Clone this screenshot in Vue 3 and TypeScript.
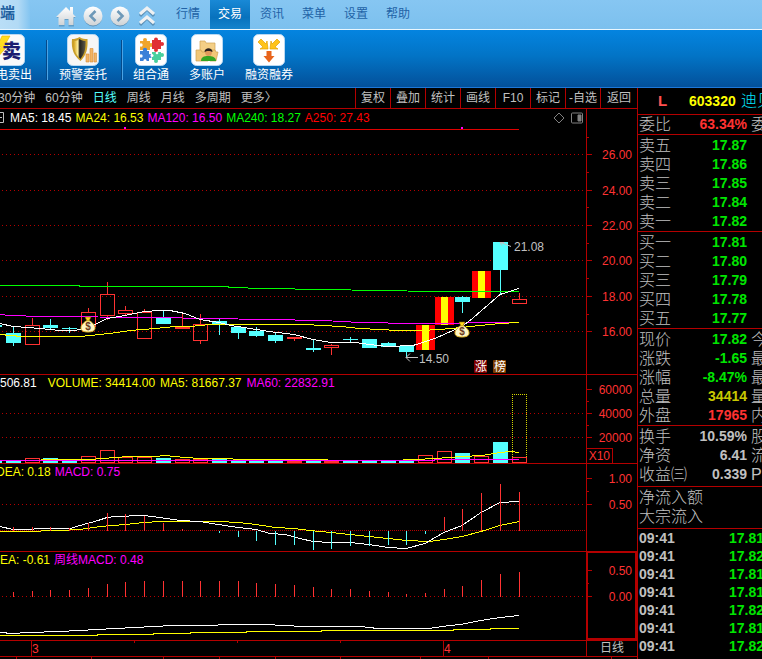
<script setup lang="ts">
type Point = [number, number]

const menu = ['行情', '交易', '资讯', '菜单', '设置', '帮助']
const activeMenu = '交易'

const periods = ['30分钟', '60分钟', '日线', '周线', '月线', '多周期', '更多〉']
const actions = ['复权', '叠加', '统计', '画线', 'F10', '标记', '-自选', '返回']

const priceLegend = [
  { text: 'MA5: 18.45', tone: 'white' },
  { text: 'MA24: 16.53', tone: 'yellow' },
  { text: 'MA120: 16.50', tone: 'magenta' },
  { text: 'MA240: 18.27', tone: 'green' },
  { text: 'A250: 27.43', tone: 'red' },
]

// x centres of the trading days
const days = [13, 32, 50, 69, 88, 107, 125, 144, 163, 182, 200, 219, 238, 256, 275, 294, 313, 331, 350, 369, 388, 406, 425, 444, 462, 481, 500, 519]

interface Candle { kind: 'up' | 'down' | 'limit'; top: number; bottom: number; high: number; low: number }
const c = (kind: Candle['kind'], top: number, bottom: number, high = top, low = bottom): Candle => ({ kind, top, bottom, high, low })

const candles: Candle[] = [
  c('down', 333, 343, 327, 346),
  c('up', 325, 345, 318),
  c('down', 325, 328, 319, 329),
  c('down', 328, 329, 327, 333),
  c('up', 312, 327, 308),
  c('up', 294, 316, 282, 320),
  c('up', 310, 314, 306, 316),
  c('up', 312, 339, 309),
  c('down', 318, 324, 311),
  c('up', 327, 329, 314),
  c('up', 324, 341, 314, 344),
  c('down', 321, 324, 319, 335),
  c('down', 327, 333, 326, 339),
  c('down', 331, 336, 327, 337),
  c('down', 335, 341, 333, 343),
  c('up', 337, 339, 337, 341),
  c('down', 348, 350, 340, 352),
  c('up', 345, 348, 344, 355),
  c('down', 339, 340, 337, 342),
  c('down', 339, 348),
  c('down', 343, 347, 342),
  c('down', 346, 352, 346, 357),
  c('limit', 325, 350),
  c('limit', 297, 325),
  c('down', 297, 302, 296, 313),
  c('limit', 271, 298),
  c('down', 242, 270, 242, 294),
  c('up', 299, 304, 293),
]

const volumes = [460, 458, 458, 460, 456, 450, 457, 457, 458, 459, 459, 459, 461, 461, 461, 461, 461, 461, 461, 461, 461, 461, 455, 451, 453, 456, 442, 457]
const macd = [527, 527, 527, 528, 523, 513, 514, 516, 523, 529, 530, 533, 537, 541, 545, 545, 550, 549, 546, 546, 545, 545, 534, 517, 509, 493, 484, 492]
const weekly = [592, 591, 590, 590, 588, 584, 582, 581, 581, 581, 581, 581, 581, 583, 584, 585, 587, 589, 589, 591, 592, 594, 593, 589, 586, 580, 574, 572]

const path = (points: Point[]) => points.map(p => p.join(',')).join(' ')

const price5 = path([[0, 323], [13, 326], [28, 327], [50, 329], [60, 330], [75, 330], [88, 327], [95, 324], [107, 318], [125, 315], [144, 311], [160, 310], [170, 310], [185, 313], [200, 319], [219, 322], [231, 325], [250, 328], [269, 331], [294, 334], [313, 339], [331, 342], [355, 342], [369, 344], [388, 346], [413, 345], [435, 338], [462, 326], [470, 320], [500, 294], [519, 288]])
const price24 = path([[0, 334], [22, 336], [80, 336], [100, 334], [117, 332], [130, 330], [155, 328], [175, 326], [190, 326], [210, 324], [304, 324], [323, 325], [341, 326], [360, 328], [380, 329], [398, 330], [420, 330], [440, 329], [462, 327], [480, 325], [500, 323], [519, 322]])
const price120 = path([[0, 314], [10, 315], [42, 316], [154, 317], [266, 319], [323, 320], [360, 322], [416, 323], [519, 322]])
const price240 = path([[0, 285], [79, 285], [80, 286], [228, 286], [229, 287], [266, 288], [323, 289], [379, 290], [435, 291], [519, 291]])
const vol5 = path([[41, 459], [90, 459], [115, 457], [130, 456], [155, 456], [165, 455], [185, 457], [200, 458], [265, 459], [390, 460], [416, 459], [435, 458], [462, 456], [482, 455], [500, 452], [510, 451], [519, 452]])
const vol60 = path([[0, 460], [434, 460], [435, 459], [519, 459]])
const dif = path([[0, 526], [13, 529], [28, 529], [40, 528], [70, 528], [80, 525], [98, 520], [107, 517], [115, 516], [144, 515], [160, 517], [180, 520], [200, 521], [212, 523], [238, 527], [256, 529], [270, 533], [285, 534], [300, 538], [313, 541], [331, 542], [350, 542], [369, 544], [388, 547], [406, 548], [425, 543], [435, 537], [444, 532], [462, 525], [481, 512], [500, 502], [519, 501]])
const dea = path([[0, 531], [22, 531], [60, 530], [80, 529], [100, 526], [125, 524], [144, 522], [160, 521], [220, 521], [238, 522], [256, 524], [275, 527], [294, 528], [310, 530], [331, 532], [350, 534], [369, 536], [388, 538], [406, 540], [430, 541], [444, 539], [462, 536], [481, 531], [500, 525], [519, 521]])
const weekDif = path([[0, 632], [13, 633], [28, 632], [60, 631], [79, 630], [97, 629], [115, 628], [135, 627], [154, 626], [172, 625], [265, 624], [304, 626], [360, 626], [378, 628], [429, 628], [442, 626], [460, 624], [481, 620], [500, 617], [519, 615]])
const weekDea = path([[0, 635], [97, 635], [98, 634], [153, 634], [154, 633], [190, 633], [191, 632], [246, 632], [247, 631], [321, 631], [322, 630], [453, 630], [454, 629], [490, 629], [491, 628], [519, 628]])

const priceTicks = [{ y: 154, label: '26.00' }, { y: 190, label: '24.00' }, { y: 225, label: '22.00' }, { y: 260, label: '20.00' }, { y: 296, label: '18.00' }, { y: 331, label: '16.00' }]
const volumeTicks = [{ y: 389, label: '60000' }, { y: 413, label: '40000' }, { y: 437, label: '20000' }]
const macdTicks = [{ y: 478, label: '1.00' }, { y: 504, label: '0.50' }]
const weekTicks = [{ y: 570, label: '0.50' }, { y: 596, label: '0.00' }]

interface Row { label: string; value: string; tone: string; next?: string }
const sections: Row[][] = [
  [{ label: '委比', value: '63.34%', tone: 'loss', next: '委' }],
  [['五', '17.87'], ['四', '17.86'], ['三', '17.85'], ['二', '17.84'], ['一', '17.82']].map(([n, value]) => ({ label: '卖' + n, value, tone: 'gain' })),
  [['一', '17.81'], ['二', '17.80'], ['三', '17.79'], ['四', '17.78'], ['五', '17.77']].map(([n, value]) => ({ label: '买' + n, value, tone: 'gain' })),
  [
    { label: '现价', value: '17.82', tone: 'gain', next: '今' },
    { label: '涨跌', value: '-1.65', tone: 'gain', next: '最' },
    { label: '涨幅', value: '-8.47%', tone: 'gain', next: '最' },
    { label: '总量', value: '34414', tone: 'gold', next: '量' },
    { label: '外盘', value: '17965', tone: 'loss', next: '内' },
  ],
  [
    { label: '换手', value: '10.59%', tone: 'plain', next: '股' },
    { label: '净资', value: '6.41', tone: 'plain', next: '流' },
    { label: '收益㈢', value: '0.339', tone: 'plain', next: 'P' },
  ],
]
const flows = ['净流入额', '大宗流入']
const trades = ['17.81', '17.82', '17.81', '17.81', '17.82', '17.81', '17.82']
</script>

<template>
  <div class="terminal">
    <header class="topbar">
      <div class="brand">端</div>
      <div class="quick">
        <button type="button" aria-label="主页">
          <svg width="22" height="22" viewBox="0 0 22 22">
            <defs>
              <linearGradient id="silver" x1="0" y1="0" x2="0" y2="1">
                <stop offset="0" stop-color="#fff" /><stop offset="1" stop-color="#cfd3d6" />
              </linearGradient>
            </defs>
            <path d="M4 20.500V12H1.500L11 3l4 3.500V2.500h3V9l2.500 3H19v8.500h-5.500V14h-4v6.500z" fill="#4d85ad" opacity=".6" transform="translate(0 1)" />
            <path d="M3.500 20V12H1L11 2l4 4V2h3v7l3 3h-2.500v8h-5v-6h-4v6z" fill="url(#silver)" />
          </svg>
        </button>
        <button type="button" aria-label="后退">
          <svg width="22" height="22" viewBox="0 0 22 22">
            <circle cx="11" cy="12.500" r="9" fill="#5b8fb5" /><circle cx="11" cy="11" r="9.500" fill="url(#silver)" />
            <path d="M13.500 6l-5 5 5 5" fill="none" stroke="#6e99b8" stroke-width="2.600" />
          </svg>
        </button>
        <button type="button" aria-label="前进">
          <svg width="22" height="22" viewBox="0 0 22 22">
            <circle cx="11" cy="12.500" r="9" fill="#5b8fb5" /><circle cx="11" cy="11" r="9.500" fill="url(#silver)" />
            <path d="M8.500 6l5 5-5 5" fill="none" stroke="#6e99b8" stroke-width="2.600" />
          </svg>
        </button>
        <button type="button" aria-label="收起">
          <svg width="22" height="22" viewBox="0 0 22 22" fill="none" stroke-width="3">
            <path d="M4 10l7-7 7 7M4 19l7-7 7 7" stroke="#5b8fb5" transform="translate(0 1)" />
            <path d="M4 9l7-6 7 6M4 18l7-6 7 6" stroke="#eef1f3" />
          </svg>
        </button>
      </div>
      <nav class="menu">
        <a v-for="m in menu" :key="m" href="#" :class="{ active: m === activeMenu }">{{ m }}</a>
      </nav>
    </header>

    <div class="toolbar">
      <button type="button" class="tool first">
        <svg width="32" height="32" viewBox="0 0 32 32">
          <rect x=".5" y=".5" width="31" height="31" rx="5" fill="#fafafa" stroke="#b9d8f2" />
          <path d="M9 2h8l-4 7h4L4 24l4-11H4z" fill="#ffdc1e" stroke="#e9b400" stroke-width=".6" />
          <text x="9" y="24" font-size="19" font-weight="900" fill="#1d1d72">卖</text>
        </svg>
        <span>电卖出</span>
      </button>
      <i class="split"></i>
      <button type="button" class="tool">
        <svg width="32" height="32" viewBox="0 0 32 32">
          <defs>
            <linearGradient id="shield" x1="0" y1="0" x2="1" y2="0">
              <stop offset="0" stop-color="#d4a21a" /><stop offset=".35" stop-color="#fff0a0" /><stop offset=".5" stop-color="#24231e" /><stop offset="1" stop-color="#5d5a4a" />
            </linearGradient>
          </defs>
          <rect x=".5" y=".5" width="31" height="31" rx="5" fill="#f6f6f6" stroke="#b9d8f2" />
          <path d="M12.500 3c3 2 5 2 8 2 .5 10-1 16-7 22C7 22 4 15 5 5c3 0 5-.5 7.500-2z" fill="#caa02b" />
          <path d="M12.500 5c2 1.500 4 2 6 2 .3 8-1 13-5 18C8 20 6 14 7 7c2 0 4-.5 5.500-2z" fill="url(#shield)" />
          <path d="M19 28V20h3v8zM23 28V14.500h3V28zM27 28v-9h2.500v9z" fill="#f2b566" stroke="#d98f3a" stroke-width=".6" />
        </svg>
        <span>预警委托</span>
      </button>
      <i class="split"></i>
      <div class="tools">
        <button type="button" class="tool">
          <svg width="32" height="32" viewBox="0 0 32 32">
            <rect x=".5" y=".5" width="31" height="31" rx="5" fill="#fff" stroke="#b9d8f2" />
            <g fill="#efa52c"><path d="M5 7h10v9H5z" /><circle cx="10" cy="6" r="2" /><circle cx="16" cy="11" r="2" /></g>
            <g fill="#e02f35"><path d="M17 6h9v9h-9z" /><circle cx="21" cy="5.500" r="2" /><circle cx="27" cy="10" r="2" /><circle cx="21" cy="16" r="2" /></g>
            <g fill="#3b80d8"><path d="M5 17h9v10H5z" /><circle cx="10" cy="16" r="2.200" /><circle cx="15" cy="22" r="2" /></g>
            <g fill="#48cf9e"><path d="M17 18h9v8h-9z" /><circle cx="21" cy="27" r="2" /><circle cx="27" cy="21" r="2" /></g>
            <g fill="#fff"><circle cx="6" cy="11" r="1.700" /><circle cx="17" cy="21.500" r="1.500" /><circle cx="6" cy="22" r="1.700" /><circle cx="10" cy="26.500" r="1.500" /><circle cx="22" cy="19" r="1.300" /></g>
          </svg>
          <span>组合通</span>
        </button>
        <button type="button" class="tool">
          <svg width="32" height="32" viewBox="0 0 32 32">
            <rect x=".5" y=".5" width="31" height="31" rx="5" fill="#fff" stroke="#b9d8f2" />
            <path d="M9 7h5l1 2h9v10H9z" fill="#f4cf86" stroke="#cfa050" stroke-width=".7" />
            <path d="M5 16h5l1 2h6v9H5zM19 16h5l1 2h2l-2 9h-6z" fill="#f2c777" stroke="#cfa050" stroke-width=".7" />
            <path d="M10 27c0-4 3-5 7-5s8 1 8 5z" fill="#35a522" />
            <circle cx="17.500" cy="18.500" r="3.400" fill="#e09a5c" />
            <path d="M13.500 18c0-5 8-5 8 0-2-1.500-6-1.500-8 0z" fill="#2a211c" />
          </svg>
          <span>多账户</span>
        </button>
        <button type="button" class="tool wide">
          <svg width="32" height="32" viewBox="0 0 32 32">
            <rect x=".5" y=".5" width="31" height="31" rx="5" fill="#fff" stroke="#b9d8f2" />
            <path d="M5 8l3-3 5 5 1-3 1 8h-8l3-2zM27 8l-3-3-5 5-1-3-1 8h8l-3-2z" fill="#ffc31a" stroke="#e4a000" stroke-width=".7" />
            <path d="M13.500 17h5v5h3L16 28.500 10.500 22h3z" fill="#e8641b" />
          </svg>
          <span>融资融券</span>
        </button>
      </div>
    </div>

    <div class="workspace">
      <main class="charts">
        <div class="subnav">
          <div class="periods">
            <button v-for="p in periods" :key="p" type="button" :class="{ on: p === '日线' }">{{ p }}</button>
          </div>
          <div class="actions">
            <button v-for="a in actions" :key="a" type="button">{{ a }}</button>
          </div>
        </div>

        <section class="panel price">
          <div class="plot">
            <div class="legend top">
              <svg class="lead" width="5" height="12" viewBox="0 0 5 12" fill="none" stroke="#c0c0c0"><path d="M0 .5h3.500v10H0M0 5.500h2" /></svg>
              <span v-for="l in priceLegend" :key="l.text" :class="l.tone">{{ l.text }}</span>
              <svg class="tail" width="30" height="12" viewBox="0 0 30 12" fill="none" stroke="#808080">
                <path d="M6 1l5 5-5 5-5-5z" /><rect x="18.500" y="1" width="11" height="10" rx="1" /><path d="M25 3h3v6h-3z" fill="#808080" />
              </svg>
            </div>
            <svg class="drawing" viewBox="0 127 586 247" preserveAspectRatio="xMaxYMin meet">
              <line v-for="t in priceTicks" :key="t.y" class="grid" x1="2" x2="584" :y1="t.y + 0.5" :y2="t.y + 0.5" />
              <path d="M0 129.500H519" stroke="#e00000" shape-rendering="crispEdges" />
              <path d="M124 127h2v2h-2zM461 127h2v2h-2z" fill="#f0f" />
              <g shape-rendering="crispEdges">
                <rect x="0" y="325" width="2" height="2" fill="#54ffff" />
                <g v-for="(k, i) in candles" :key="i" :class="k.kind">
                  <template v-if="k.kind === 'limit'">
                    <rect class="edge" :x="days[i] - 9" :y="k.top" width="19" :height="k.bottom - k.top" />
                    <rect class="core" :x="days[i] - 3" :y="k.top" width="7" :height="k.bottom - k.top" />
                  </template>
                  <template v-else>
                    <path :d="`M${days[i] + 0.5} ${k.high}V${k.top}M${days[i] + 0.5} ${k.bottom}V${k.low}`" />
                    <rect v-if="k.kind === 'down'" :x="days[i] - 7" :y="k.top" width="15" :height="k.bottom - k.top" />
                    <rect v-else :x="days[i] - 6.5" :y="k.top + 0.5" width="14" :height="k.bottom - k.top - 1" />
                  </template>
                </g>
              </g>
              <g class="curve" transform="translate(0 .5)">
                <polyline class="green" :points="price240" /><polyline class="magenta" :points="price120" />
                <polyline class="yellow" :points="price24" /><polyline class="white" :points="price5" />
              </g>
              <g v-for="b in [[88, 325], [462, 330]]" :key="b[0]" :transform="`translate(${b[0]} ${b[1]})`">
                <path d="M-3-8h6l-2 4h-2z" fill="#ffd91c" stroke="#8a6a00" stroke-width=".6" />
                <path d="M-2-4h4c4 3 5 5 5 7 0 3-3 4-7 4s-7-1-7-4c0-2 1-4 5-7z" fill="#fff6c2" stroke="#e0b526" />
                <text x="0" y="5" text-anchor="middle" font-size="10" font-weight="700" fill="#6b3a1c">$</text>
              </g>
              <g class="note">
                <path d="M502 245.500l-2-3h4M501 242.500l10 4M406 357.500h12M410 353.500l-4 4 4 4" fill="none" stroke="#c0c0c0" />
                <text x="514" y="251">21.08</text><text x="419" y="363">14.50</text>
              </g>
              <rect x="474" y="360" width="13" height="13" rx="1" fill="#7c0000" /><rect x="493" y="360" width="13" height="13" rx="1" fill="#7c3c00" />
              <g fill="#fff" font-size="12"><text x="475" y="371">涨</text><text x="494" y="371">榜</text></g>
            </svg>
          </div>
          <svg class="scale" viewBox="586 109 51 265">
            <path class="tick" d="M587 172.500h2M587 207.500h2M587 243.500h2M587 278.500h2M587 314.500h2M587 137.500h2" />
            <g v-for="t in priceTicks" :key="t.y"><path class="tick" :d="`M587 ${t.y + 0.5}h5`" /><text x="632" :y="t.y + 5">{{ t.label }}</text></g>
          </svg>
        </section>

        <section class="panel volume">
          <div class="plot">
            <div class="legend wide"><span class="white">506.81</span><span class="yellow start">VOLUME: 34414.00</span><span class="yellow">MA5: 81667.37</span><span class="magenta">MA60: 22832.91</span></div>
            <svg class="drawing" viewBox="0 393 586 70" preserveAspectRatio="xMaxYMin meet">
              <path class="grid" d="M2 413.500H584M2 437.500H584" />
              <g shape-rendering="crispEdges">
                <rect x="0" y="461" width="2" height="2" fill="#54ffff" />
                <g v-for="(v, i) in volumes" :key="i" :class="candles[i].kind === 'down' ? 'down' : 'up'">
                  <rect v-if="candles[i].kind === 'down'" :x="days[i] - 7" :y="v" width="15" :height="463 - v" />
                  <rect v-else :x="days[i] - 6.5" :y="v + 0.5" width="14" :height="462 - v" />
                </g>
                <path d="M512.500 457V394.500H526.500V457" fill="none" stroke="#d6d600" stroke-dasharray="1 1" />
              </g>
              <g class="curve" transform="translate(0 .5)"><polyline class="yellow" :points="vol5" /><polyline class="magenta" :points="vol60" /></g>
            </svg>
          </div>
          <svg class="scale" viewBox="586 375 51 88">
            <path class="tick" d="M587 401.500h2M587 425.500h2M587 448.500h25.500V463" />
            <g v-for="t in volumeTicks" :key="t.y"><path class="tick" :d="`M587 ${t.y + 0.5}h5`" /><text x="632" :y="t.y + 5">{{ t.label }}</text></g>
            <text x="610" y="460">X10</text>
          </svg>
        </section>

        <section class="panel macd">
          <div class="plot">
            <div class="legend cut"><span class="yellow">DEA: 0.18</span><span class="magenta">MACD: 0.75</span></div>
            <svg class="drawing" viewBox="0 482 586 69" preserveAspectRatio="xMaxYMin meet">
              <path class="grid" d="M2 504.500H584" /><path class="grid dense" d="M0 530.500H586" />
              <g class="curve" transform="translate(0 .5)"><polyline class="yellow" :points="dea" /><polyline class="white" :points="dif" /></g>
              <path v-for="(m, i) in macd" :key="i" :class="m > 530 ? 'bar-down' : 'bar-up'" :d="`M${days[i] + 0.5} 530.500V${m}`" />
            </svg>
          </div>
          <svg class="scale" viewBox="586 464 51 87">
            <path class="tick" d="M587 491.500h2" />
            <g v-for="t in macdTicks" :key="t.y"><path class="tick" :d="`M587 ${t.y + 0.5}h5`" /><text x="632" :y="t.y + 5">{{ t.label }}</text></g>
          </svg>
        </section>

        <section class="panel weekly">
          <div class="plot">
            <div class="legend"><span class="yellow">EA: -0.61</span><span class="magenta">周线MACD: 0.48</span></div>
            <svg class="drawing" viewBox="0 570 586 70" preserveAspectRatio="xMaxYMin meet">
              <path class="grid" d="M2 596.500H584" />
              <path v-for="(w, i) in weekly" :key="i" class="bar-up" :d="`M${days[i] + 0.5} 597V${w}`" />
              <g class="curve" transform="translate(0 .5)"><polyline class="white" :points="weekDif" /><polyline class="yellow" :points="weekDea" /></g>
            </svg>
          </div>
          <svg class="scale" viewBox="586 552 51 88">
            <rect x="587" y="552" width="49" height="87" fill="none" stroke="#b40000" stroke-width="2" />
            <path class="tick" d="M587 583.500h2" />
            <g v-for="t in weekTicks" :key="t.y"><path class="tick" :d="`M587 ${t.y + 0.5}h5`" /><text x="632" :y="t.y + 5">{{ t.label }}</text></g>
          </svg>
        </section>

        <footer class="timeline">
          <svg class="months" viewBox="0 641 586 15" preserveAspectRatio="xMaxYMin meet">
            <path class="tick" d="M31.500 641v15M443.500 641v15M134.500 641v2M237.500 641v2M340.500 641v2" />
            <text x="32" y="653">3</text><text x="444" y="653">4</text>
          </svg>
          <span>日线</span>
        </footer>
        <svg class="ruler" viewBox="0 657 637 2" preserveAspectRatio="xMaxYMin meet">
          <path class="tick" d="M16.500 657v2M91.500 657v2M163.500 657v2M219.500 657v2M275.500 657v2M340.500 657v2M420.500 657v2M488.500 657v2M611.500 657v2" />
        </svg>
      </main>

      <aside class="quote">
        <div class="stock"><span class="flag">L</span><b>603320</b><span class="name">迪贝</span></div>
        <table v-for="(rows, s) in sections" :key="s" :class="{ first: s === 0, last: s === 4 }">
          <tbody>
            <tr v-for="r in rows" :key="r.label"><th scope="row">{{ r.label }}</th><td :class="r.tone">{{ r.value }}</td><td class="next">{{ r.next }}</td></tr>
          </tbody>
        </table>
        <ul class="flows"><li v-for="f in flows" :key="f">{{ f }}</li></ul>
        <table class="trades">
          <tbody><tr v-for="(t, i) in trades" :key="i"><td class="time">09:41</td><td class="deal">{{ t }}</td></tr></tbody>
        </table>
      </aside>
    </div>
  </div>
</template>

<style>
body { margin: 0; background: #000; overflow: hidden; }
</style>

<style scoped>
.terminal { min-height: 100vh; overflow: hidden; background: #000; color: #c0c0c0; font: 12px/16px "Liberation Sans", "Noto Sans CJK SC", sans-serif; }
button { margin: 0; padding: 0; border: 0; background: none; color: inherit; font: inherit; white-space: nowrap; }
svg { display: block; }

.topbar { display: flex; height: 29px; border-bottom: 1px solid #eaf7ff; background: linear-gradient(#86c6f2, #7cc0ee); }
.brand { width: 30px; box-sizing: border-box; margin-right: 25px; color: #20609f; background: linear-gradient(90deg, #b9def7, #b2daf5 60%, #84c5f1); font-size: 15px; font-weight: 700; line-height: 26px; }
.quick { display: flex; gap: 5px; padding-top: 2px; }
.menu { display: flex; margin-left: 9px; }
.menu a { width: 42px; color: #2162a6; text-align: center; text-decoration: none; line-height: 28px; }
.menu a.active { width: 40px; margin: 0 1px; color: #fff; background: linear-gradient(#1989d6, #0872bd 60%, #1483cd); }

.toolbar { display: flex; height: 57px; border-bottom: 1px solid #1e78d8; background: linear-gradient(#0484e0, #0274c6 45%, #03509a); color: #fff; }
.tool { display: flex; flex-direction: column; align-items: center; gap: 1px; width: 48px; padding-top: 4px; }
.tool.first { width: 32px; align-items: flex-end; }
.tool.first svg { margin-right: 7px; }
.tool.wide { margin-left: 6px; }
.tool svg { flex: none; }
.split { width: 1px; height: 40px; margin: 10px 11px 0 14px; background: #04498a; border-right: 1px solid #4ba3e4; }
.tools { display: flex; gap: 8px; margin-left: -7px; }

.workspace { display: grid; grid-template-columns: minmax(0, 1fr) 125px; }
.charts { min-width: 0; }
.subnav { display: flex; justify-content: space-between; height: 20px; border-bottom: 1px solid #b40000; line-height: 19px; }
.periods { display: flex; gap: 10px; margin-left: -2px; }
.periods .on { color: #54ffff; }
.actions { display: flex; }
.actions button { box-sizing: border-box; width: 35px; border-left: 1px solid #b40000; }
.actions button:last-child { width: 37px; }

.panel { display: grid; grid-template-columns: minmax(0, 1fr) 51px; border-bottom: 1px solid #b40000; }
.plot { min-width: 0; overflow: hidden; }
.legend { display: flex; gap: 4px; height: 18px; white-space: nowrap; line-height: 17px; }
.legend.top { line-height: 19px; }
.legend.wide { gap: 5px; }
.legend.wide .start { margin-left: 6px; }
.legend.cut { margin-left: -4px; }
.lead { margin: 3px 1px 0 0; }
.tail { margin: 3px 3px 0 auto; }
.drawing { width: 100%; }
.price .drawing { height: 247px; }
.volume .drawing { height: 70px; }
.macd .drawing { height: 69px; }
.weekly .drawing { height: 70px; }
.scale { box-sizing: border-box; width: 51px; height: 100%; background: linear-gradient(90deg, #b40000 1px, transparent 1px); }
.scale text { fill: #ff3232; text-anchor: end; }
.grid { fill: none; stroke: #b40000; stroke-dasharray: 1 3; shape-rendering: crispEdges; }
.grid.dense { stroke-dasharray: 1 1; }
.tick { fill: none; stroke: #b40000; shape-rendering: crispEdges; }
.up { fill: none; stroke: #ff3232; }
.down rect { fill: #54ffff; }
.down path { stroke: #54ffff; }
.limit .edge { fill: #f00; }
.limit .core { fill: #ff0; }
.curve { fill: none; shape-rendering: crispEdges; }
.curve .white { stroke: #fff; }
.curve .yellow { stroke: #ff0; }
.curve .magenta { stroke: #f0f; }
.curve .green { stroke: #0f0; }
.bar-up { stroke: #ff3232; shape-rendering: crispEdges; }
.bar-down { stroke: #54ffff; shape-rendering: crispEdges; }
.note text { fill: #c0c0c0; }
span.white { color: #fff; }
span.yellow { color: #ff0; }
span.magenta { color: #f0f; }
span.green { color: #0f0; }
span.red { color: #f00; }

.timeline { display: grid; grid-template-columns: minmax(0, 1fr) 51px; height: 15px; border-bottom: 1px solid #b40000; }
.timeline span { box-sizing: border-box; border-left: 1px solid #b40000; text-align: center; line-height: 14px; }
.months { width: 100%; height: 15px; }
.months text { fill: #ff3232; }
.ruler { width: 100%; height: 2px; }

.quote { overflow: hidden; border-left: 1px solid #b40000; }
.stock { display: flex; align-items: center; height: 26px; border-bottom: 1px solid #b40000; white-space: nowrap; font-size: 14px; }
.flag { flex: none; box-sizing: border-box; width: 51px; padding-left: 20px; color: #ff5050; font-size: 15px; font-weight: 700; }
.stock b { flex: none; width: 52px; color: #ff0; }
.name { flex: none; color: #00e5ff; font-size: 16px; font-weight: 300; }
.quote table { width: 100%; padding-top: 1px; table-layout: fixed; border-collapse: separate; border-spacing: 0; border-bottom: 1px solid #b40000; }
.quote table.first { padding-top: 0; }
.quote table.last { padding-bottom: 2px; }
.quote tr { height: 19px; }
.quote th { width: 51px; padding: 0 0 0 1px; text-align: left; white-space: nowrap; font-size: 16px; font-weight: 300; line-height: 19px; }
.quote td { width: 57px; padding: 0; text-align: right; font-size: 14px; font-weight: 700; line-height: 19px; }
.quote td.next { width: auto; padding-left: 4px; overflow: hidden; text-align: left; font-size: 16px; font-weight: 300; }
.gain { color: #00e600; }
.loss { color: #ff3232; }
.gold { color: #c8c800; }
.flows { margin: 0; padding: 1px 0 2px 1px; border-bottom: 1px solid #b40000; list-style: none; font-size: 16px; font-weight: 300; line-height: 19px; }
.quote table.trades { padding-top: 0; border-bottom: 0; }
.quote .trades tr { height: 18px; }
.quote .trades td { line-height: 18px; }
.quote .trades .time { width: 91px; padding-left: 1px; text-align: left; box-sizing: border-box; }
.quote .trades .deal { width: auto; color: #00e600; text-align: left; }
</style>
